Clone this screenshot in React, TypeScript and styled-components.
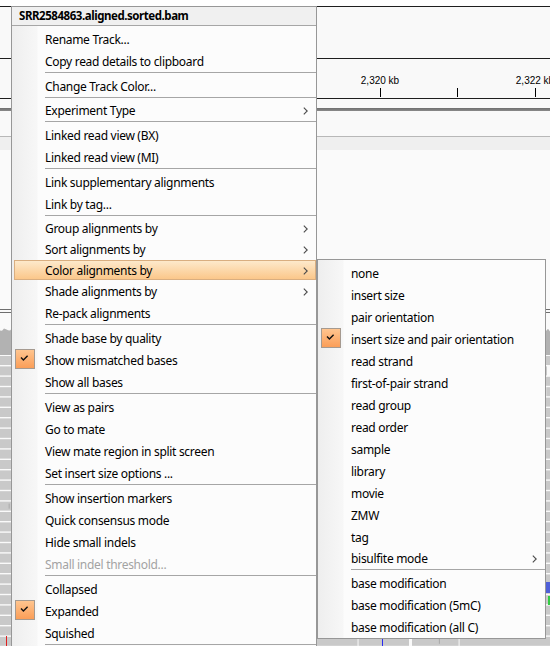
import React from "react";
import styled, { createGlobalStyle, css } from "styled-components";

const GlobalStyle = createGlobalStyle`
  html, body { margin: 0; padding: 0; background: #fafafa; }
  body { font-family: "Noto Sans", "Open Sans", sans-serif; }
`;

/* ---------- IGV background ---------- */

const Stage = styled.div`
  position: relative;
  width: 550px;
  height: 646px;
  overflow: hidden;
  background: #fafafa;
  display: flex;
  flex-direction: column;
`;

const TopStrip = styled.div`
  flex: none;
  height: 6px;
  background: #ffffff;
`;

const DarkRule = styled.div`
  flex: none;
  height: 1px;
  background: #1e1e1e;
`;

const NamePanel = styled.div`
  flex: none;
  height: 51px;
  background: #f9f9f9;
`;

const RulerSvg = styled.svg`
  flex: none;
  display: block;
  background: #f9f9f9;
  font-family: "Liberation Sans", Arial, sans-serif;
  font-size: 10px;
`;

const Gap = styled.div<{ $h: number }>`
  flex: none;
  height: ${(p) => p.$h}px;
  background: #f9f9f9;
`;

const ThickRule = styled.div`
  flex: none;
  height: 3px;
  background: linear-gradient(#6f6f6f, #8a8a8a);
`;

const LightRule = styled.div`
  flex: none;
  height: 1px;
  background: #b8b8b8;
`;

const GreyBand = styled.div`
  flex: none;
  height: 13px;
  background: #efefef;
`;

const Filler = styled.div`
  flex: none;
  height: 159px;
  background: #fafafa;
`;

const TrackRule = styled.div`
  flex: none;
  height: 1px;
  background: #6e6e6e;
`;

const TrackSvg = styled.svg`
  flex: none;
  display: block;
  background: #fafafa;
`;

/* ---------- Menus ---------- */

const MenuPanel = styled.div<{ $left: number; $top: number; $width: number }>`
  position: absolute;
  left: ${(p) => p.$left}px;
  top: ${(p) => p.$top}px;
  width: ${(p) => p.$width}px;
  box-sizing: border-box;
  border: 1px solid #979797;
  background: linear-gradient(to right, #eeeeee 0px, #f7f7f7 25px, #fcfcfc 26px);
  font-family: "Noto Sans", "Open Sans", sans-serif;
  font-size: 12px;
  letter-spacing: -0.3px;
  color: #000;
  display: flex;
  flex-direction: column;
`;

const SubPanel = styled(MenuPanel)`
  padding-top: 2px;
`;

const MenuTitle = styled.div`
  height: 18px;
  line-height: 18px;
  padding-left: 7px;
  font-size: 11.5px;
  letter-spacing: -0.45px;
  font-weight: 700;
  background: #f0f0f0;
  white-space: nowrap;
`;

const TitleRule = styled.div`
  height: 3px;
  box-sizing: border-box;
  border-top: 1px solid #a6a6a6;
`;

const Separator = styled.div`
  height: 3px;
  box-sizing: border-box;
  margin-left: 33px;
  border-top: 1px solid #a6a6a6;
`;

const Item = styled.div<{ $sub?: boolean; $active?: boolean; $disabled?: boolean }>`
  position: relative;
  height: ${(p) => (p.$sub ? 21 : 22)}px;
  display: grid;
  grid-template-columns: 26px 1fr auto;
  align-items: center;
  padding-right: 8px;
  color: ${(p) => (p.$disabled ? "#a3a3a3" : "#000")};
  white-space: nowrap;
  ${(p) =>
    p.$active &&
    css`
      &::before {
        content: "";
        position: absolute;
        left: 2px;
        right: 0px;
        top: 0px;
        bottom: 1px;
        border: 1px solid #d9ae80;
        background: linear-gradient(#fde9cb, #fbc78a);
      }
    `}
`;

const Gutter = styled.span`
  position: relative;
  align-self: stretch;
`;

const CheckBox = styled.span`
  position: absolute;
  left: 3px;
  top: 0px;
  width: 20px;
  height: 20px;
  box-sizing: border-box;
  border: 1px solid #a59a90;
  background: linear-gradient(#ffc58f, #fb9e58);
`;

const Label = styled.span`
  position: relative;
  padding-left: 7px;
`;

const Arrow = styled.svg`
  position: relative;
  display: block;
`;

type Entry =
  | "sep"
  | { t: string; sub?: boolean; active?: boolean; checked?: boolean; disabled?: boolean };

const mainEntries: Entry[] = [
  { t: "Rename Track..." },
  { t: "Copy read details to clipboard" },
  "sep",
  { t: "Change Track Color..." },
  "sep",
  { t: "Experiment Type", sub: true },
  "sep",
  { t: "Linked read view (BX)" },
  { t: "Linked read view (MI)" },
  "sep",
  { t: "Link supplementary alignments" },
  { t: "Link by tag..." },
  "sep",
  { t: "Group alignments by", sub: true },
  { t: "Sort alignments by", sub: true },
  { t: "Color alignments by", sub: true, active: true },
  { t: "Shade alignments by", sub: true },
  { t: "Re-pack alignments" },
  "sep",
  { t: "Shade base by quality" },
  { t: "Show mismatched bases", checked: true },
  { t: "Show all bases" },
  "sep",
  { t: "View as pairs" },
  { t: "Go to mate" },
  { t: "View mate region in split screen" },
  { t: "Set insert size options ..." },
  "sep",
  { t: "Show insertion markers" },
  { t: "Quick consensus mode" },
  { t: "Hide small indels" },
  { t: "Small indel threshold...", disabled: true },
  "sep",
  { t: "Collapsed" },
  { t: "Expanded", checked: true },
  { t: "Squished" },
  "sep",
];

const colorEntries: Entry[] = [
  { t: "none" },
  { t: "insert size" },
  { t: "pair orientation" },
  { t: "insert size and pair orientation", checked: true },
  { t: "read strand" },
  { t: "first-of-pair strand" },
  { t: "read group" },
  { t: "read order" },
  { t: "sample" },
  { t: "library" },
  { t: "movie" },
  { t: "ZMW" },
  { t: "tag" },
  { t: "bisulfite mode", sub: true },
  "sep",
  { t: "base modification" },
  { t: "base modification (5mC)" },
  { t: "base modification (all C)" },
];

const Check = () => (
  <svg width="20" height="20" viewBox="0 0 20 20" style={{ position: "absolute", left: -1, top: -1 }}>
    <path d="M6 8.6 L8.4 11 L12.6 6.8" fill="none" stroke="#111" strokeWidth="1.4" />
  </svg>
);

const Chevron = () => (
  <Arrow width="5" height="8" viewBox="0 0 5 8">
    <path d="M0.8 0.6 L4.2 4 L0.8 7.4" fill="none" stroke="#4a4a4a" strokeWidth="1.1" />
  </Arrow>
);

const MenuList: React.FC<{ entries: Entry[] }> = ({ entries }) => (
  <>
    {entries.map((e, i) =>
      e === "sep" ? (
        <Separator key={i} />
      ) : (
        <Item key={i} $sub={e.sub} $active={e.active} $disabled={e.disabled}>
          <Gutter>
            {e.checked && (
              <CheckBox>
                <Check />
              </CheckBox>
            )}
          </Gutter>
          <Label>{e.t}</Label>
          {e.sub ? <Chevron /> : <span />}
        </Item>
      )
    )}
  </>
);

/* ---------- track drawings ---------- */

function rng(seed: number) {
  let s = seed;
  return () => {
    s = (s * 9301 + 49297) % 233280;
    return s / 233280;
  };
}

const Coverage = () => {
  const r = rng(7);
  const pts: string[] = ["0,42"];
  for (let x = 0; x <= 550; x += 2) {
    pts.push(`${x},${(15 + r() * 5).toFixed(1)}`);
  }
  pts.push("550,42");
  return (
    <TrackSvg width={550} height={42} viewBox="0 0 550 42">
      <polygon points={pts.join(" ")} fill="#b2b2b2" />
    </TrackSvg>
  );
};

const Reads = () => {
  const r = rng(13);
  const rows: React.ReactNode[] = [];
  const pitch = 10.4;
  for (let i = 0; i < 29; i++) {
    const y = 1 + i * pitch;
    let x = -r() * 40;
    let k = 0;
    while (x < 560) {
      const w = 40 + r() * 110;
      rows.push(
        <rect key={`${i}-${k++}`} x={x} y={y} width={w} height={9} fill="#c9c9c9" />
      );
      if (r() < 0.5) {
        const mx = x + 4 + r() * (w - 8);
        rows.push(
          <rect key={`${i}-m${k++}`} x={mx} y={y + 2} width={1} height={5} fill="#a9a9a9" />
        );
      }
      x += w + 1 + (r() < 0.3 ? 2 : 0);
    }
  }
  return (
    <TrackSvg width={550} height={291} viewBox="0 0 550 291">
      {rows}
      <rect x={546} y={227} width={4} height={11} fill="#4f5fd8" />
      <rect x={548} y={241} width={2} height={9} fill="#33cc44" />
      <rect x={382} y={280} width={1} height={11} fill="#2a2af0" />
      <rect x={6} y={281} width={1} height={10} fill="#e02020" />
    </TrackSvg>
  );
};

export default function App() {
  return (
    <>
      <GlobalStyle />
      <Stage>
        <TopStrip />
        <DarkRule />
        <NamePanel />
        <DarkRule />
        <RulerSvg width={550} height={39} viewBox="0 0 550 39">
          <text x={380} y={25} textAnchor="middle" fill="#000">2,320 kb</text>
          <text x={535} y={25} textAnchor="middle" fill="#000">2,322 kb</text>
          <rect x={380} y={29} width={1} height={9} fill="#000" />
          <rect x={457} y={29} width={1} height={9} fill="#000" />
          <rect x={535} y={29} width={1} height={9} fill="#000" />
        </RulerSvg>
        <DarkRule />
        <Gap $h={9} />
        <ThickRule />
        <Gap $h={25} />
        <LightRule />
        <GreyBand />
        <Filler />
        <TrackRule />
        <Gap $h={2} />
        <TrackRule />
        <Coverage />
        <Reads />

        <MenuPanel $left={11} $top={6} $width={306}>
          <MenuTitle>SRR2584863.aligned.sorted.bam</MenuTitle>
          <TitleRule />
          <MenuList entries={mainEntries} />
        </MenuPanel>

        <SubPanel $left={317} $top={259} $width={229}>
          <MenuList entries={colorEntries} />
        </SubPanel>
      </Stage>
    </>
  );
}
